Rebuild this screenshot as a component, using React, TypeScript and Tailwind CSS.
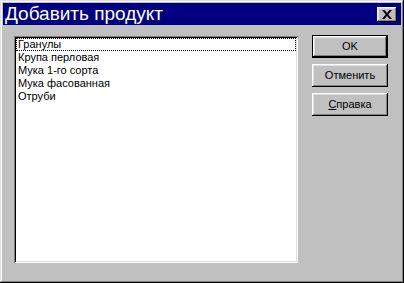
import React from "react";

const items = ["Гранулы", "Крупа перловая", "Мука 1-го сорта", "Мука фасованная", "Отруби"];

const raised =
  "shadow-[inset_-1px_-1px_#000,inset_1px_1px_#fff,inset_-2px_-2px_#808080,inset_2px_2px_#dfdfdf]";

const Btn: React.FC<{ children: React.ReactNode; def?: boolean }> = ({ children, def }) => {
  if (def) {
    return (
      <div className="w-[76px] h-[23px] border border-black">
        <div className={"w-full h-full bg-[#c0c0c0] flex items-center justify-center " + raised}>
          {children}
        </div>
      </div>
    );
  }
  return (
    <div className={"w-[76px] h-[23px] bg-[#c0c0c0] flex items-center justify-center " + raised}>
      {children}
    </div>
  );
};

const App: React.FC = () => {
  return (
    <div
      className="w-[404px] h-[283px] bg-[#c0c0c0] p-[3px] flex flex-col shadow-[inset_-1px_-1px_#000,inset_1px_1px_#dfdfdf,inset_-2px_-2px_#808080,inset_2px_2px_#fff]"
      style={{ fontFamily: '"Liberation Sans", Arial, sans-serif' }}
    >
      <div className="h-[22px] bg-[#000080] flex items-center justify-between pl-[2px] pr-[4px]">
        <span className="text-white text-[19px] leading-[22px]">Добавить продукт</span>
        <div className={"w-[20px] h-[15px] bg-[#c0c0c0] flex items-center justify-center " + raised}>
          <svg width="10" height="9" viewBox="0 0 10 9">
            <path d="M0 0h2.5l2.5 3 2.5-3h2.5l-3.7 4.5 3.7 4.5h-2.5l-2.5-3-2.5 3h-2.5l3.7-4.5z" fill="#000" />
          </svg>
        </div>
      </div>
      <div className="flex pl-[11px] pt-[11px] gap-[14px]">
        <div className="w-[284px] h-[227px] bg-white shadow-[inset_1px_1px_#808080,inset_-1px_-1px_#fff,inset_2px_2px_#000,inset_-2px_-2px_#dfdfdf] p-[2px]">
          <div className="text-[11px] text-black">
            {items.map((t, i) => (
              <div
                key={t}
                className={
                  "h-[13px] leading-[13px] pl-[2px] " +
                  (i === 0 ? "outline outline-1 outline-dotted outline-black -outline-offset-1" : "")
                }
              >
                {t}
              </div>
            ))}
          </div>
        </div>
        <div className="flex flex-col gap-[6px] -mt-[1px] text-[11px] text-black">
          <Btn def>OK</Btn>
          <Btn>Отменить</Btn>
          <Btn>
            <span>
              <span className="underline">С</span>правка
            </span>
          </Btn>
        </div>
      </div>
    </div>
  );
};

export default App;
